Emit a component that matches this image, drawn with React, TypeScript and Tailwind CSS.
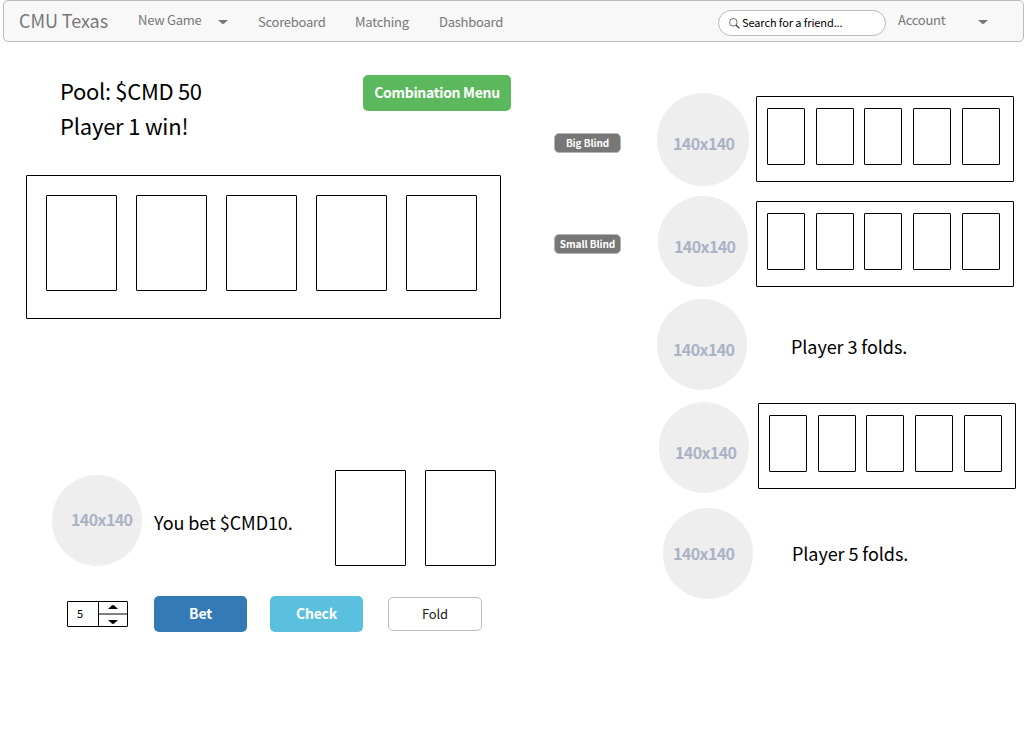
import React from "react";

function Caret({ className = "", up = false }: { className?: string; up?: boolean }) {
  return (
    <svg className={`block shrink-0 ${className}`} viewBox="0 0 10 4" preserveAspectRatio="none" fill="currentColor">
      <path d={up ? "M0 4 L3.8 0.4 Q5 -0.4 6.2 0.4 L10 4Z" : "M0 0 L3.8 3.6 Q5 4.4 6.2 3.6 L10 0Z"} />
    </svg>
  );
}

function Avatar({ size, label }: { size: string; label: string }) {
  return (
    <div className={`shrink-0 rounded-full bg-[#eeeeee] ${size}`}>
      <div className={`whitespace-nowrap text-[16px] leading-[20px] font-bold tracking-[-0.6px] text-[#aab2c6] ${label}`}>
        140x140
      </div>
    </div>
  );
}

function Badge({ children, className }: { children: React.ReactNode; className: string }) {
  return (
    <div className={`h-5 w-[67px] shrink-0 rounded-[5px] border border-[#b4b4b4] bg-[#777777] text-center text-[10px] leading-[18px] font-bold tracking-[-0.08px] whitespace-nowrap text-white ${className}`}>
      {children}
    </div>
  );
}

function BigCard() {
  return <div className="h-24 w-[71px] shrink-0 rounded-[1px] border border-black bg-white" />;
}

function Hand({ className }: { className: string }) {
  const card = "h-[57px] w-[38px] shrink-0 rounded-[1px] border border-black bg-white";
  return (
    <div className={`flex h-[86px] w-[258px] shrink-0 rounded-[1px] border border-black bg-white pt-[11px] pl-[10px] ${className}`}>
      <div className={card} />
      <div className={`${card} ml-[11px]`} />
      <div className={`${card} ml-[10px]`} />
      <div className={`${card} ml-[11px]`} />
      <div className={`${card} ml-[11px]`} />
    </div>
  );
}

function NavBar() {
  return (
    <header className="ml-[3px] flex h-[42px] w-[1021px] rounded-[5px] border border-[#bbbbbb] bg-[#f8f8f8] pl-[15px] text-[13px] leading-[20px] tracking-[-0.25px] whitespace-nowrap text-[#777777]">
      <div className="w-[119px] pt-[8px] text-[18px] leading-[22px] tracking-[-0.08px]">CMU Texas</div>
      <div className="w-20 pt-[9px]">New Game</div>
      <div className="w-10 pt-[19px]"><Caret className="h-1 w-[10px]" /></div>
      <div className="w-[97px] pt-[11px]">Scoreboard</div>
      <div className="w-[84px] pt-[11px]">Matching</div>
      <div className="w-[279px] pt-[11px]">Dashboard</div>
      <div className="mt-[9px] flex h-[26px] w-[168px] rounded-full border border-[#bbbbbb] bg-white pl-[10px] text-black">
        <svg className="mt-[7px] h-[11px] w-[11px] shrink-0" viewBox="0 0 11 11" fill="none" stroke="#333">
          <circle cx="4.3" cy="4.3" r="3.8" strokeWidth="0.7" />
          <path d="M7 7 L10.3 10.4" strokeWidth="1.2" />
        </svg>
        <div className="ml-[2px] pt-px text-[11px] tracking-[-0.1px]">Search for a friend...</div>
      </div>
      <div className="ml-3 w-20 pt-[9px]">Account</div>
      <div className="pt-[19px]"><Caret className="h-1 w-[10px]" /></div>
    </header>
  );
}

function Table() {
  return (
    <section className="w-[554px] shrink-0">
      <div className="flex pt-[31px] pl-[60px]">
        <div className="w-[303px] text-[22px] leading-[35px]">
          <p className="tracking-[-0.32px]">Pool: $CMD 50</p>
          <p className="tracking-[-0.2px]">Player 1 win!</p>
        </div>
        <button className="mt-[2px] h-9 w-[148px] rounded-[5px] bg-[#5cb85c] pb-[2px] text-[14px] leading-[32px] font-bold tracking-[-0.33px] whitespace-nowrap text-white">
          Combination Menu
        </button>
      </div>
      <div className="mt-8 ml-[26px] flex h-36 w-[475px] gap-[19px] rounded-[1px] border border-black bg-white p-[19px]">
        <BigCard />
        <BigCard />
        <BigCard />
        <BigCard />
        <BigCard />
      </div>
      <div className="mt-[151px] ml-[52px] flex">
        <Avatar size="mt-[5px] h-[91px] w-[90px]" label="pt-[34px] ml-[19px]" />
        <div className="ml-3 w-[181px] pt-[40px] text-[18px] leading-[24px] tracking-[-0.07px] whitespace-nowrap">You bet $CMD10.</div>
        <BigCard />
        <div className="w-[19px]" />
        <BigCard />
      </div>
      <div className="mt-[30px] ml-[67px] flex">
        <div className="mt-[5px] flex h-[26px] w-[61px] rounded-[1px] border border-black bg-white">
          <div className="w-[31px] border-r border-black pl-[9px] text-[11px] leading-[22px]">5</div>
          <div className="flex flex-1 flex-col items-center">
            <Caret up className="mt-[3px] mr-px h-1 w-[10px]" />
            <div className="mt-1 h-[2px] w-full bg-[#808080]" />
            <Caret className="mt-[5px] mr-px h-1 w-[10px]" />
          </div>
        </div>
        <button className="ml-[26px] h-9 w-[93px] rounded-[5px] bg-[#337ab7] pb-[2px] text-[14px] leading-[32px] font-bold tracking-[-0.2px] text-white">Bet</button>
        <button className="ml-[23px] h-9 w-[93px] rounded-[5px] bg-[#5bc0de] pb-[2px] text-[14px] leading-[32px] font-bold tracking-[-0.2px] text-white">Check</button>
        <button className="mt-px ml-[25px] h-[34px] w-[94px] rounded-[5px] border border-[#bbbbbb] bg-white text-[13px] leading-[32px] tracking-[-0.2px] text-[#222222]">Fold</button>
      </div>
    </section>
  );
}

function Players() {
  return (
    <section className="flex-1 pt-[51px] whitespace-nowrap">
      <div className="flex h-[103px] items-start">
        <Badge className="mt-10">Big Blind</Badge>
        <div className="ml-9 w-[99px]"><Avatar size="h-[93px] w-[92px]" label="pt-[40px] ml-[16px]" /></div>
        <Hand className="mt-[3px]" />
      </div>
      <div className="flex h-[103px] items-start">
        <Badge className="mt-[38px]">Small Blind</Badge>
        <div className="ml-[37px] w-[98px]"><Avatar size="h-[91px] w-[90px]" label="pt-[40px] ml-[16px]" /></div>
        <Hand className="mt-[5px]" />
      </div>
      <div className="flex h-[103px] items-start pl-[103px]">
        <Avatar size="h-[91px] w-[90px]" label="pt-[40px] ml-[16px]" />
        <div className="ml-[44px] pt-[35px] text-[18px] leading-[24px] tracking-[-0.07px]">Player 3 folds.</div>
      </div>
      <div className="flex h-[106px] items-start pl-[105px]">
        <Avatar size="h-[91px] w-[90px]" label="pt-[40px] ml-[16px]" />
        <Hand className="mt-px ml-[9px]" />
      </div>
      <div className="flex items-start pl-[109px]">
        <Avatar size="h-[91px] w-[90px]" label="pt-[35px] ml-[10px]" />
        <div className="ml-[39px] pt-[33px] text-[18px] leading-[24px] tracking-[-0.07px]">Player 5 folds.</div>
      </div>
    </section>
  );
}

export default function App() {
  return (
    <div className="h-[747px] w-[1036px] overflow-hidden bg-white font-['Noto_Sans_CJK_SC',sans-serif] text-black">
      <NavBar />
      <main className="flex">
        <Table />
        <Players />
      </main>
    </div>
  );
}
